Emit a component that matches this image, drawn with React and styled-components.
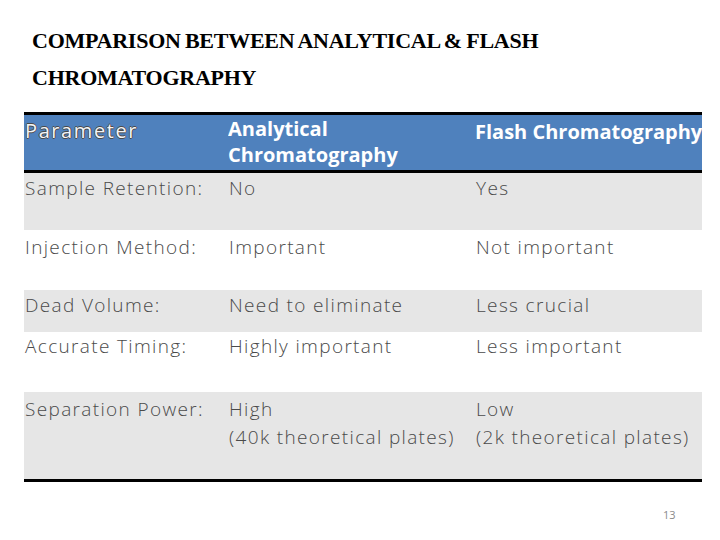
import React from "react";
import styled, { createGlobalStyle } from "styled-components";

const GlobalStyle = createGlobalStyle`
    body {
        margin: 0;
        background: #ffffff;
    }
`;

const Slide = styled.div`
    width: 720px;
    height: 540px;
    position: relative;
    overflow: hidden;
    background: #ffffff;
    display: flex;
    flex-direction: column;
`;

const Title = styled.h1`
    margin: 22px 0 0 32px;
    font-family: "Liberation Serif", serif;
    font-weight: 700;
    font-size: 22px;
    line-height: 37px;
    letter-spacing: -0.25px;
    word-spacing: -1px;
    color: #000000;
`;

const Table = styled.div`
    margin: 16px 0 0 24px;
    width: 678px;
    border-top: 3px solid #000000;
    border-bottom: 3px solid #000000;
    display: flex;
    flex-direction: column;
`;

const Row = styled.div`
    display: grid;
    grid-template-columns: 204px 247px 227px;
    height: ${({ $h }) => $h}px;
    background: ${({ $shade }) => ($shade ? "#e6e6e6" : "#ffffff")};
    padding-top: ${({ $pad }) => $pad}px;
    box-sizing: border-box;
`;

const HeaderRow = styled(Row)`
    background: #4f81bd;
    border-bottom: 3px solid #000000;
`;

const HeadCell = styled.div`
    font-family: "Open Sans", sans-serif;
    font-weight: 700;
    font-size: 20px;
    line-height: 26px;
    color: #ffffff;
    white-space: nowrap;
    overflow: hidden;
    padding-top: ${({ $drop }) => $drop || 0}px;
`;

const OutlineCell = styled.div`
    font-family: "Open Sans", sans-serif;
    font-weight: 400;
    font-size: 20px;
    line-height: 26px;
    color: #f2f4f7;
    text-shadow: 0.8px 0 0 #4a4a4a, -0.8px 0 0 #4a4a4a, 0 0.8px 0 #4a4a4a,
        0 -0.8px 0 #4a4a4a;
    letter-spacing: 1.6px;
    padding: 2px 0 0 1px;
`;

const Cell = styled.div`
    font-family: "Open Sans", sans-serif;
    font-weight: 300;
    font-size: 19px;
    line-height: 28px;
    letter-spacing: 1.35px;
    color: #4a4a4a;
    white-space: nowrap;
    padding-left: 1px;
`;

const PageNum = styled.div`
    position: absolute;
    left: 663px;
    top: 507px;
    font-family: "Open Sans", sans-serif;
    font-size: 11px;
    color: #8a8a8a;
`;

const rows = [
    { p: "Sample Retention:", a: "No", f: "Yes", h: 57, pad: 1, shade: true },
    { p: "Injection Method:", a: "Important", f: "Not important", h: 60, pad: 3, shade: false },
    { p: "Dead Volume:", a: "Need to eliminate", f: "Less crucial", h: 42, pad: 1, shade: true },
    { p: "Accurate Timing:", a: "Highly important", f: "Less important", h: 60, pad: 0, shade: false },
    {
        p: "Separation Power:",
        a: ["High", "(40k theoretical plates)"],
        f: ["Low", "(2k theoretical plates)"],
        h: 87,
        pad: 3,
        shade: true,
    },
];

const Lines = ({ v }) =>
    Array.isArray(v) ? v.map((l) => <div key={l}>{l}</div>) : v;

const App = () => {
    return (
        <Slide>
            <GlobalStyle />
            <Title>
                COMPARISON BETWEEN ANALYTICAL &amp; FLASH
                <br />
                CHROMATOGRAPHY
            </Title>
            <Table>
                <HeaderRow $h={58} $pad={1}>
                    <OutlineCell>Parameter</OutlineCell>
                    <HeadCell>
                        Analytical
                        <br />
                        Chromatography
                    </HeadCell>
                    <HeadCell $drop={3}>Flash Chromatography</HeadCell>
                </HeaderRow>
                {rows.map((r) => (
                    <Row key={r.p} $h={r.h} $pad={r.pad} $shade={r.shade}>
                        <Cell>{r.p}</Cell>
                        <Cell>
                            <Lines v={r.a} />
                        </Cell>
                        <Cell>
                            <Lines v={r.f} />
                        </Cell>
                    </Row>
                ))}
            </Table>
            <PageNum>13</PageNum>
        </Slide>
    );
};

export default App;
